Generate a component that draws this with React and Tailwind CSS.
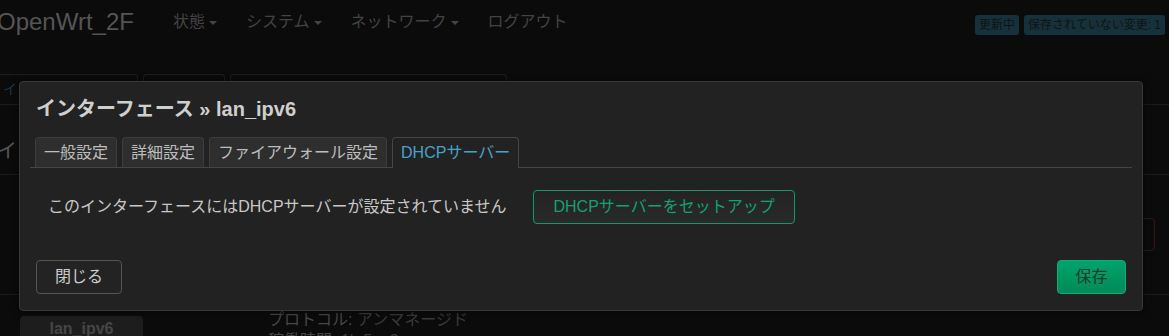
import React from "react"

const navItems = [
    { label: "状態", caret: true },
    { label: "システム", caret: true },
    { label: "ネットワーク", caret: true },
    { label: "ログアウト", caret: false },
]

const tabs = [
    { label: "一般設定" },
    { label: "詳細設定" },
    { label: "ファイアウォール設定" },
    { label: "DHCPサーバー", active: true },
]

function Caret() {
    return (
        <span className="ml-[4px] inline-block w-0 h-0 border-l-[4px] border-r-[4px] border-t-[4px] border-l-transparent border-r-transparent border-t-[#444] translate-y-[1px]" />
    )
}

// dimmed page that sits behind the modal
function BackgroundPage() {
    return (
        <div className="flex flex-col">
            <header className="h-[44px] flex items-center">
                <div className="-ml-[3px] text-[24px] leading-none text-[#555]">OpenWrt_2F</div>
                <nav className="ml-[39px] flex items-center gap-[29px] text-[16px] text-[#434343]">
                    {navItems.map((item) => (
                        <span key={item.label} className="flex items-center">
                            {item.label}
                            {item.caret && <Caret />}
                        </span>
                    ))}
                </nav>
                <div className="ml-auto mr-[4px] self-start mt-[15px] flex gap-[5px] shrink-0">
                    <span className="h-[20px] px-[4px] rounded-[3px] bg-[#17313a] text-[12px] leading-[20px] text-[#0c1417]">更新中</span>
                    <span className="h-[20px] px-[4px] rounded-[3px] bg-[#17313a] text-[12px] leading-[20px] text-[#0c1417] whitespace-nowrap">保存されていない変更: 1</span>
                </div>
            </header>

            <div className="mt-[30px] h-[31px] flex gap-[5px] border-b border-[#1c1c1c]">
                <div className="-ml-[4px] w-[142px] rounded-t-[4px] border border-b-0 border-[#1e1e1e] pl-[6px] flex items-center text-[14px] text-[#1b3646]">
                    インターフェース
                </div>
                <div className="w-[82px] rounded-t-[4px] border border-b-0 border-[#1e1e1e]" />
                <div className="w-[277px] rounded-t-[4px] border border-b-0 border-[#1e1e1e]" />
            </div>

            <h2 className="-ml-[3px] mt-[32px] text-[20px] leading-[28px] text-[#555]">インターフェース</h2>

            <div className="mt-[9px] h-px bg-[#1c1c1c]" />
            <div className="h-[119px] flex justify-end">
                <div className="mt-[43px] mr-[14px] w-[60px] h-[33px] rounded-[4px] border border-[#3a1515]" />
            </div>
            <div className="h-px bg-[#1c1c1c]" />

            <div className="flex items-start">
                <div className="ml-[20px] mt-[21px] w-[123px] h-[30px] rounded-t-[4px] bg-[#1d1d1d] text-center text-[16px] leading-[26px] font-bold text-[#454545]">
                    lan_ipv6
                </div>
                <div className="ml-[125px] mt-[14px] text-[16px] leading-[21px] text-[#3a3a3a]">
                    <div>
                        <span className="text-[#474747]">プロトコル:</span> アンマネージド
                    </div>
                    <div>
                        <span className="text-[#474747]">稼働時間:</span> 1h 5m 3s
                    </div>
                </div>
            </div>
        </div>
    )
}

function InterfaceModal() {
    return (
        <div className="absolute left-[19px] top-[81px] w-[1124px] h-[230px] flex flex-col bg-[#222] border border-[#383838] rounded-[4px] shadow-[0_0_8px_rgba(0,0,0,0.6)] px-[10px] pt-[13px]">
            <h4 className="pl-[6px] text-[20px] leading-[28px] font-bold text-[#cfcfcf]">
                インターフェース » lan_ipv6
            </h4>

            <ul className="mt-[14px] h-[31px] flex gap-[5px] pl-[5px] border-b border-[#454545]">
                {tabs.map((tab) =>
                    tab.active ? (
                        <li
                            key={tab.label}
                            className="self-start h-[31px] px-[8px] flex items-center pb-px rounded-t-[4px] border border-b-0 border-[#454545] bg-[#222] text-[16px] text-[#48a2c8]"
                        >
                            {tab.label}
                        </li>
                    ) : (
                        <li
                            key={tab.label}
                            className="h-[30px] px-[8px] flex items-center rounded-t-[4px] border border-b-0 border-[#3d3d3d] bg-[#2e2e2e] text-[16px] text-[#bdbdbd]"
                        >
                            {tab.label}
                        </li>
                    )
                )}
            </ul>

            <div className="mt-[22px] h-[34px] flex items-center pl-[18px]">
                <span className="text-[16px] text-[#c8c8c8]">このインターフェースにはDHCPサーバーが設定されていません</span>
                <button className="ml-[27px] h-[34px] px-[19px] rounded-[4px] border border-[#00a36c] bg-linear-to-b from-[#232323] to-[#2a2a2a] text-[16px] text-[#0fa36e]">
                    DHCPサーバーをセットアップ
                </button>
            </div>

            <div className="mt-[36px] flex justify-between px-[6px]">
                <button className="w-[86px] h-[34px] rounded-[4px] border border-[#555] bg-[#232323] text-[16px] text-[#cccccc]">
                    閉じる
                </button>
                <button className="w-[69px] h-[34px] rounded-[4px] border border-[#0cae77] bg-linear-to-b from-[#00a36c] to-[#008a5a] text-[16px] text-[#173d2c]">
                    保存
                </button>
            </div>
        </div>
    )
}

export default function App() {
    return (
        <div className="relative w-[1169px] h-[336px] overflow-hidden bg-[#0b0b0b] font-['Liberation_Sans','Noto_Sans_CJK_JP',sans-serif]">
            <BackgroundPage />
            <InterfaceModal />
        </div>
    )
}
